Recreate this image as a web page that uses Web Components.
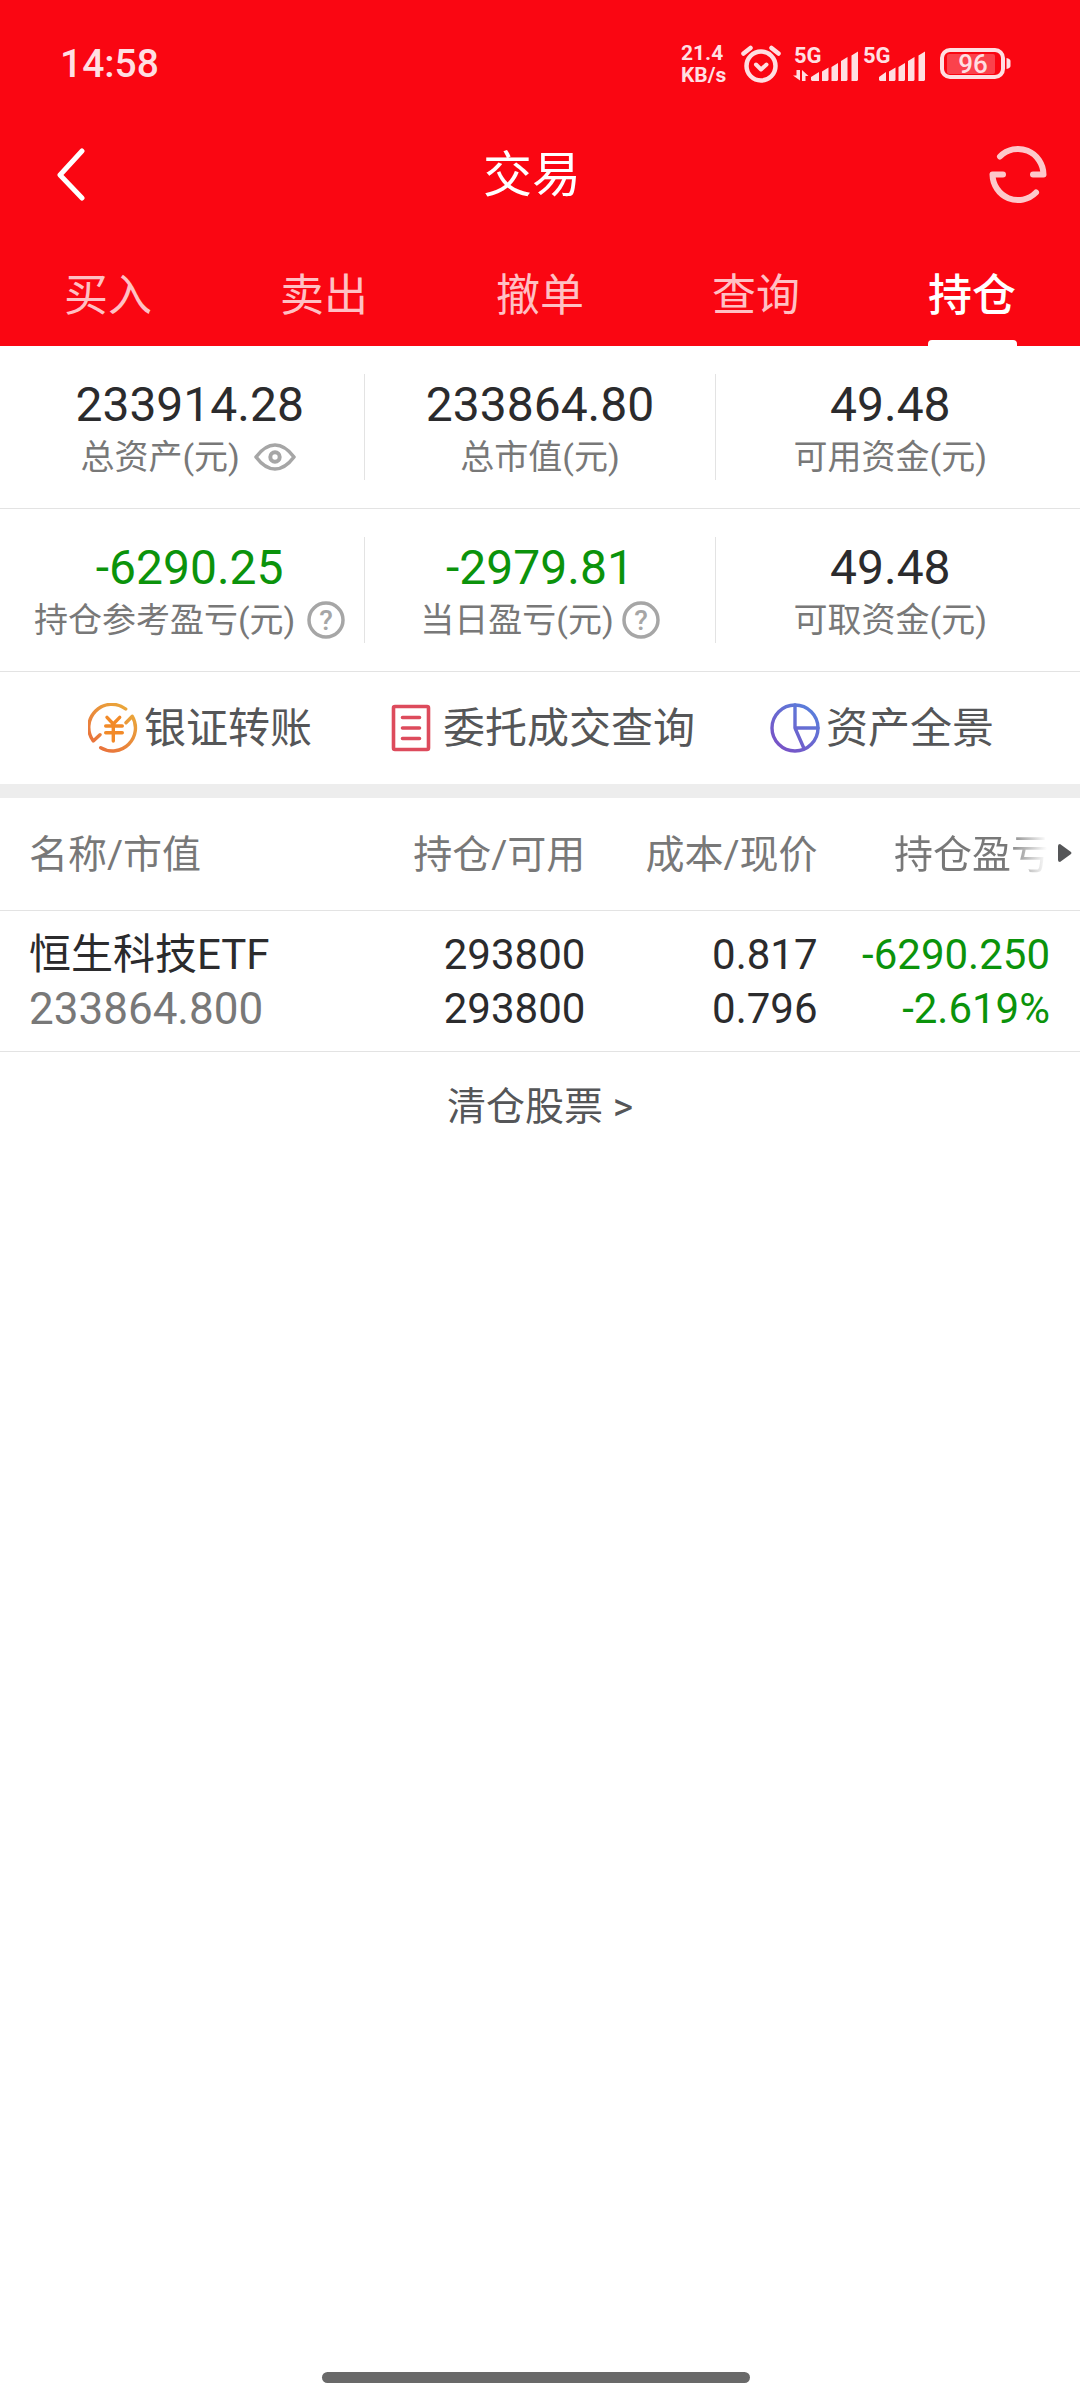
<!DOCTYPE html>
<html lang="zh-CN">
<head>
<meta charset="utf-8">
<meta name="viewport" content="width=device-width, initial-scale=1">
<title>交易</title>
<style>
  html, body { margin: 0; padding: 0; background: #fff; }
  body {
    --brand: #fa0612;
    --ink: #2b2b2d;
    --muted: #787878;
    --action: #555658;
    --line: #e3e3e3;
    --down: #0b930b;
    font-family: Roboto, "Noto Sans CJK SC", sans-serif;
    color: var(--ink);
  }
</style>
</head>
<body>
<trade-app></trade-app>

<template id="status-bar">
  <style>
    :host { display: flex; align-items: center; height: 128px; padding: 0 68px 0 60px; color: #ffdfe2; }
    .time { flex: 1; font-size: 39px; line-height: 48px; font-weight: 500; }
    .speed { font-size: 21px; line-height: 22px; font-weight: 700; width: 60px; }
    .speed span { display: block; }
    svg { display: block; fill: currentColor; font-weight: 700; font-size: 22px; }
    .alarm { margin-right: 12px; }
    .sig { margin-right: 5px; }
    .batt { margin-left: 13px; }
  </style>
  <span class="time">14:58</span>
  <span class="speed"><span>21.4</span><span>KB/s</span></span>
  <svg class="alarm" width="40" height="38" viewBox="0 0 40 38" stroke="currentColor" stroke-linecap="round" stroke-linejoin="round">
    <g fill="none">
      <circle cx="20" cy="21" r="14.500" stroke-width="4.500"/>
      <path d="M15 19.500l5 5 5.500-5" stroke-width="4"/>
      <path d="M2.500 8.500l7-5.500M37.500 8.500l-7-5.500" stroke-width="4.500"/>
    </g>
  </svg>
  <svg class="sig" width="65" height="52" viewBox="0 -8 65 52">
    <text x="1" y="17">5G</text>
    <path d="M3.500 24h3.500v10.500L0 29.500h3.500zM9 35V24l6.500 6h-3v5z"/>
    <path d="M18 34v-3l8-5v9h-7zM29 35V25.500l6.500-4V34l-1 1zM38.500 35V21l6.500-4v17l-1 1zM48 35V15l6.500-4v23l-1 1zM58.500 35V9.500l6.500-4V34l-1 1z"/>
  </svg>
  <svg width="62" height="52" viewBox="0 -8 62 52">
    <text x="0" y="17">5G</text>
    <path d="M16 34v-3l7-5v9h-6zM26 35V25.500l6.500-4V34l-1 1zM35.500 35V21l6.500-4v17l-1 1zM45 35V15l6.500-4v23l-1 1zM55.500 35V9.500l6.500-4V34l-1 1z"/>
  </svg>
  <svg class="batt" width="74" height="34" viewBox="0 0 74 34">
    <rect x="4" y="3" width="61" height="27" rx="8" fill="none" stroke="currentColor" stroke-width="4"/>
    <rect x="9" y="7" width="48" height="20" rx="2" opacity=".28"/>
    <path d="M68.500 11q4 1 4 3v5q0 2-4 3z"/>
    <text x="35" y="26" text-anchor="middle" font-size="26" font-weight="500">96</text>
  </svg>
</template>

<template id="title-bar">
  <style>
    :host { display: flex; align-items: center; height: 92px; color: #fff; }
    button { border: 0; background: none; color: inherit; padding: 0; height: 92px; display: flex; align-items: center; justify-content: center; }
    .back { width: 142px; }
    .refresh { width: 158px; padding-left: 34px; opacity: .78; }
    h1 { flex: 1; margin: 0; padding-top: 3px; text-align: center; font-size: 49px; line-height: 60px; font-weight: 400; }
    svg { display: block; fill: none; stroke: currentColor; stroke-linecap: round; stroke-linejoin: round; }
  </style>
  <button class="back" aria-label="返回">
    <svg width="30" height="54" viewBox="0 0 30 54" stroke-width="5"><path d="M26 4L4 28l22 23"/></svg>
  </button>
  <h1><slot></slot></h1>
  <button class="refresh" aria-label="刷新">
    <svg width="58" height="60" viewBox="0 0 58 60" stroke-width="6">
      <path d="M11 12.500A25.500 26 0 0 1 54.500 30.500H44M47 48.500A25.500 26 0 0 1 3.500 30.500H14"/>
    </svg>
  </button>
</template>

<template id="tab-strip">
  <style>
    :host { display: block; padding-top: 24px; }
    nav { display: flex; }
  </style>
  <nav><slot></slot></nav>
</template>

<template id="tab-item">
  <style>
    :host { display: flex; flex: 1; justify-content: center; }
    a { display: flex; flex-direction: column; align-items: center; height: 102px; color: #ffc0c4; text-decoration: none; font-size: 44px; line-height: 104px; }
    a::after { content: ""; flex: none; width: 89px; height: 6px; margin-top: -8px; border-radius: 4px 4px 0 0; }
    :host([active]) a { color: #fff; font-weight: 500; }
    :host([active]) a::after { background: #fff; }
  </style>
  <a href="#"><slot></slot></a>
</template>

<template id="asset-row">
  <style>
    :host { display: flex; padding: 28px 15px; border-bottom: 1px solid var(--line); }
  </style>
  <slot></slot>
</template>

<template id="asset-cell">
  <style>
    :host { display: flex; flex: 1; flex-direction: column; align-items: center; box-sizing: border-box; height: 106px; padding-top: 1px; min-width: 0; white-space: nowrap; }
    :host(:not(:first-child)) { border-left: 1px solid var(--line); }
    .value { font-size: 48px; line-height: 60px; }
    :host([down]) .value { color: var(--down); }
    .label { display: flex; align-items: center; gap: 12px; font-size: 34px; line-height: 44px; color: var(--muted); }
    :host([compact]) .label { gap: 8px; }
  </style>
  <span class="value"><slot name="value"></slot></span>
  <span class="label"><slot></slot></span>
</template>

<template id="eye-toggle">
  <style>
    :host { display: block; }
    button { display: block; border: 0; background: none; padding: 0 3px 0 2px; color: #a6a6a6; }
    svg { display: block; fill: none; stroke: currentColor; }
  </style>
  <button aria-label="显示或隐藏资产">
    <svg width="42" height="28" viewBox="0 0 42 28">
      <path d="M2 14Q11 2 21 2t19 12Q31 26 21 26T2 14z" stroke-width="3.600" stroke-linejoin="round"/>
      <circle cx="21" cy="14" r="4.700" stroke-width="4"/>
    </svg>
  </button>
</template>

<template id="help-button">
  <style>
    :host { display: block; }
    button { display: block; border: 0; background: none; padding: 0; color: #a6a6a6; font: inherit; }
    svg { display: block; }
    circle { fill: none; stroke: currentColor; stroke-width: 3.5px; }
    text { fill: currentColor; font-size: 28px; font-weight: 500; text-anchor: middle; }
  </style>
  <button aria-label="说明">
    <svg width="38" height="38" viewBox="0 0 38 38"><circle cx="19" cy="19" r="17"/><text x="19" y="29">?</text></svg>
  </button>
</template>

<template id="quick-actions">
  <style>
    :host { display: flex; justify-content: space-between; align-items: center; height: 112px; padding: 0 86px 0 88px; border-bottom: 14px solid #ededed; }
  </style>
  <slot></slot>
</template>

<template id="quick-action">
  <style>
    :host { display: block; }
    a { display: flex; align-items: center; gap: 6px; color: var(--action); text-decoration: none; font-size: 42px; line-height: 56px; white-space: nowrap; }
    .text { padding-top: 2px; }
    ::slotted(svg) { display: block; width: 50px; height: 50px; fill: none; stroke-linecap: round; stroke-linejoin: round; }
  </style>
  <a href="#"><slot name="icon"></slot><span class="text"><slot></slot></span></a>
</template>

<template id="holdings-table">
  <style>
    :host { display: block; }
    table { width: 100%; border-collapse: collapse; table-layout: fixed; }
    col.name { width: 32.5%; } col.qty { width: 21.7%; } col.price { width: 21.5%; }
    th, td { padding: 2px 0 0; text-align: right; font-weight: 400; white-space: nowrap; border-bottom: 1px solid var(--line); }
    th:first-child, td:first-child { text-align: left; padding-left: 29px; }
    th:last-child, td:last-child { padding-right: 30px; }
    th { height: 110px; font-size: 39px; line-height: 52px; color: var(--muted); }
    td { height: 138px; font-size: 42px; line-height: 54px; }
    td span { display: block; }
    .worth { font-size: 44px; color: var(--muted); }
    .down { color: var(--down); }
    .more { position: relative; }
    .fade { background: linear-gradient(90deg, var(--muted) 72%, #fff 98%); -webkit-background-clip: text; background-clip: text; color: transparent; }
    .more svg { position: absolute; right: 8px; top: 46px; fill: var(--action); }
  </style>
  <table>
    <colgroup><col class="name"><col class="qty"><col class="price"><col></colgroup>
    <thead>
      <tr>
        <th scope="col">名称/市值</th>
        <th scope="col">持仓/可用</th>
        <th scope="col">成本/现价</th>
        <th scope="col" class="more"><span class="fade">持仓盈亏</span><svg width="14" height="18" viewBox="0 0 14 18"><path d="M0 2Q0 0 2 0L13 8q1 1 0 2L2 18q-2 0-2-2z"/></svg></th>
      </tr>
    </thead>
    <tbody>
      <tr>
        <td><span>恒生科技ETF</span><span class="worth">233864.800</span></td>
        <td><span>293800</span><span>293800</span></td>
        <td><span>0.817</span><span>0.796</span></td>
        <td class="down"><span>-6290.250</span><span>-2.619%</span></td>
      </tr>
    </tbody>
  </table>
</template>

<template id="cleared-link">
  <style>
    :host { display: flex; justify-content: center; padding: 28px 0; }
    a { color: var(--action); text-decoration: none; font-size: 39px; line-height: 54px; }
  </style>
  <a href="#"><slot></slot></a>
</template>

<template id="home-indicator">
  <style>
    :host { display: flex; justify-content: center; padding: 0 8px 17px 0; margin-top: auto; }
    div { width: 428px; height: 11px; border-radius: 6px; background: #696969; }
  </style>
  <div></div>
</template>

<template id="trade-app">
  <style>
    :host { display: flex; flex-direction: column; min-height: 100vh; background: #fff; }
    header { background: var(--brand); }
  </style>
  <header>
    <status-bar></status-bar>
    <title-bar>交易</title-bar>
    <tab-strip>
      <tab-item>买入</tab-item>
      <tab-item>卖出</tab-item>
      <tab-item>撤单</tab-item>
      <tab-item>查询</tab-item>
      <tab-item active>持仓</tab-item>
    </tab-strip>
  </header>
  <asset-row>
    <asset-cell><span slot="value">233914.28</span>总资产(元)<eye-toggle></eye-toggle></asset-cell>
    <asset-cell><span slot="value">233864.80</span>总市值(元)</asset-cell>
    <asset-cell><span slot="value">49.48</span>可用资金(元)</asset-cell>
  </asset-row>
  <asset-row>
    <asset-cell down><span slot="value">-6290.25</span>持仓参考盈亏(元)<help-button></help-button></asset-cell>
    <asset-cell down compact><span slot="value">-2979.81</span>当日盈亏(元)<help-button></help-button></asset-cell>
    <asset-cell><span slot="value">49.48</span>可取资金(元)</asset-cell>
  </asset-row>
  <quick-actions>
    <quick-action>
      <svg slot="icon" viewBox="0 0 50 50" stroke="url(#amber)" stroke-width="3.400">
        <defs><linearGradient id="amber" gradientUnits="userSpaceOnUse" x1="42" y1="4" x2="8" y2="46"><stop stop-color="#eaa93a"/><stop offset="1" stop-color="#e9703c"/></linearGradient></defs>
        <path d="M37.700 6A23 23 0 0 0 5.300 38l6.700-6.300M12.700 44.700A23 23 0 0 0 44.300 13.300L38 19.700"/>
        <path d="M19 14.300l6.300 6.700 6.400-6.700M25.300 21v17M17.700 23h16.600M17.700 29.700h16.600" stroke="#f28a28"/>
      </svg>银证转账</quick-action>
    <quick-action>
      <svg slot="icon" viewBox="0 0 50 50" stroke="#dd4b5c" stroke-width="3.600">
        <rect x="6.500" y="3.500" width="35" height="43" rx="1.500"/>
        <path d="M15.500 14.500h17M15.500 25h17M15.500 35.500h17"/>
      </svg>委托成交查询</quick-action>
    <quick-action>
      <svg slot="icon" viewBox="0 0 50 50" stroke="url(#indigo)" stroke-width="3.400">
        <defs><linearGradient id="indigo" gradientUnits="userSpaceOnUse" x1="42" y1="6" x2="10" y2="46"><stop stop-color="#5a7edb"/><stop offset="1" stop-color="#7852c6"/></linearGradient></defs>
        <circle cx="25" cy="25" r="23"/>
        <path d="M25 2v23h23M25 25l9 20.500"/>
      </svg>资产全景</quick-action>
  </quick-actions>
  <holdings-table></holdings-table>
  <cleared-link>清仓股票 &gt;</cleared-link>
  <home-indicator></home-indicator>
</template>

<script>
  class TemplateElement extends HTMLElement {
    constructor() {
      super();
      const template = document.getElementById(this.localName);
      this.attachShadow({ mode: "open" }).append(document.importNode(template.content, true));
    }
  }

  [
    "status-bar", "title-bar", "tab-strip", "tab-item",
    "asset-row", "asset-cell", "eye-toggle", "help-button",
    "quick-actions", "quick-action", "holdings-table",
    "cleared-link", "home-indicator", "trade-app"
  ].forEach(name => customElements.define(name, class extends TemplateElement {}));
</script>
</body>
</html>
